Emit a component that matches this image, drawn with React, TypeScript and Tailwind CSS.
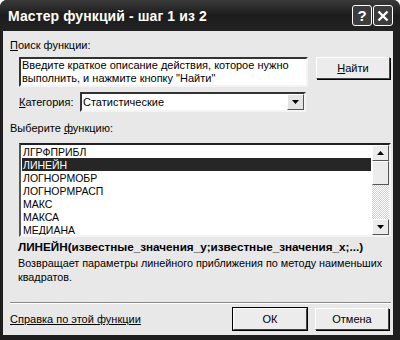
import React from 'react';

const items = ['ЛГРФПРИБЛ', 'ЛИНЕЙН', 'ЛОГНОРМОБР', 'ЛОГНОРМРАСП', 'МАКС', 'МАКСА', 'МЕДИАНА'];

function Arrow({ up }: { up?: boolean }) {
  return (
    <svg width="7" height="4" viewBox="0 0 7 4">
      <path d={up ? 'M0 4 L7 4 L3.5 0 Z' : 'M0 0 L7 0 L3.5 4 Z'} fill="#000" />
    </svg>
  );
}

function Btn({ children, def, className = '' }: { children: React.ReactNode; def?: boolean; className?: string }) {
  return (
    <button
      className={`flex items-center justify-center bg-[#ececec] border border-t-white border-l-white border-r-[#444] border-b-[#444] shadow-[1px_1px_0_#000] ${def ? 'outline outline-1 outline-black' : ''} ${className}`}
    >
      {children}
    </button>
  );
}

export default function App() {
  return (
    <div className="w-[400px] h-[340px] bg-white font-['Liberation_Sans',Arial,sans-serif] text-[11px] text-black leading-[14px]">
      <div className="w-[400px] h-[340px] bg-[#1e1e1e] rounded-t-[7px] flex flex-col">
        {/* title bar */}
        <div className="h-[31px] flex items-center pl-[8px] pr-[7px] bg-gradient-to-b from-[#3a3a3a] via-[#1c1c1c] to-[#232323] rounded-t-[7px]">
          <span className="text-white font-bold text-[14px] tracking-[0.1px] flex-1">Мастер функций - шаг 1 из 2</span>
          <div className="flex gap-[1px]">
            <div className="w-[20px] h-[21px] rounded-[3px] border border-white bg-[#3c3c3c] flex items-center justify-center text-white font-bold text-[15px]">?</div>
            <div className="w-[20px] h-[21px] rounded-[3px] border border-white bg-[#3c3c3c] flex items-center justify-center">
              <svg width="12" height="12" viewBox="0 0 12 12">
                <path d="M1.5 1.5 L10.5 10.5 M10.5 1.5 L1.5 10.5" stroke="#fff" strokeWidth="2.4" />
              </svg>
            </div>
          </div>
        </div>

        {/* body */}
        <div className="ml-[3px] mr-[7px] mb-[5px] flex-1 bg-[#e8e8e8] flex flex-col">
          <div className="mt-[7px] pl-[7px]"><u>П</u>оиск функции:</div>

          <div className="mt-[5px] ml-[16px] flex items-start gap-[8px]">
            <div className="w-[289px] h-[30px] bg-white border-2 border-t-[#333] border-l-[#333] border-r-[#f4f4f4] border-b-[#f4f4f4] px-[1px] leading-[13px]">
              Введите краткое описание действия, которое нужно выполнить, и нажмите кнопку "Найти"
            </div>
            <Btn className="w-[74px] h-[22px]"><span><u>Н</u>айти</span></Btn>
          </div>

          <div className="mt-[5px] ml-[16px] flex items-center h-[20px]">
            <span className="w-[61px]"><u>К</u>атегория:</span>
            <div className="w-[226px] h-[20px] bg-white border-2 border-t-[#333] border-l-[#333] border-r-[#f4f4f4] border-b-[#f4f4f4] flex items-center">
              <span className="flex-1 pl-[1px]">Статистические</span>
              <div className="w-[17px] h-[16px] bg-[#e4e4e4] border border-t-white border-l-white border-r-[#555] border-b-[#555] flex items-center justify-center">
                <Arrow />
              </div>
            </div>
          </div>

          <div className="mt-[9px] pl-[7px]">Выберите <u>ф</u>ункцию:</div>

          <div className="mt-[8px] ml-[16px] w-[372px] h-[94px] bg-white border-2 border-t-[#222] border-l-[#555] border-r-[#f4f4f4] border-b-[#f4f4f4] flex overflow-hidden">
            <div className="flex-1 pl-[1px] pr-[1px] overflow-hidden">
              {items.map((it) => (
                <div
                  key={it}
                  className={`h-[13px] leading-[14px] pl-[1px] text-[10.5px] ${it === 'ЛИНЕЙН' ? 'bg-[#262626] text-white' : ''}`}
                >
                  {it}
                </div>
              ))}
            </div>
            <div className="w-[17px] flex flex-col bg-[repeating-conic-gradient(#ffffff_0_25%,#d0d0d0_0_50%)] bg-[length:2px_2px]">
              <div className="h-[16px] bg-[#ececec] border border-t-white border-l-white border-r-[#555] border-b-[#555] flex items-center justify-center"><Arrow up /></div>
              <div className="h-[24px] bg-[#ececec] border border-t-white border-l-white border-r-[#555] border-b-[#555]" />
              <div className="flex-1" />
              <div className="h-[16px] bg-[#ececec] border border-t-white border-l-white border-r-[#555] border-b-[#555] flex items-center justify-center"><Arrow /></div>
            </div>
          </div>

          <div className="mt-[3px] pl-[15px] font-bold text-[11.7px]">ЛИНЕЙН(известные_значения_y;известные_значения_x;...)</div>
          <div className="mt-[2px] pl-[15px] text-[10.8px] whitespace-nowrap">
            Возвращает параметры линейного приближения по методу наименьших
            <br />
            квадратов.
          </div>

          <div className="mt-[18px] ml-[7px] mr-[2px] border-t border-t-[#8a8a8a] border-b border-b-white" />

          <div className="mt-[4px] ml-[7px] flex items-center">
            <span className="flex-1 underline">Справка по этой функции</span>
            <Btn def className="w-[74px] h-[22px]">ОК</Btn>
            <Btn className="ml-[8px] mr-[4px] w-[74px] h-[22px]">Отмена</Btn>
          </div>
        </div>
      </div>
    </div>
  );
}
